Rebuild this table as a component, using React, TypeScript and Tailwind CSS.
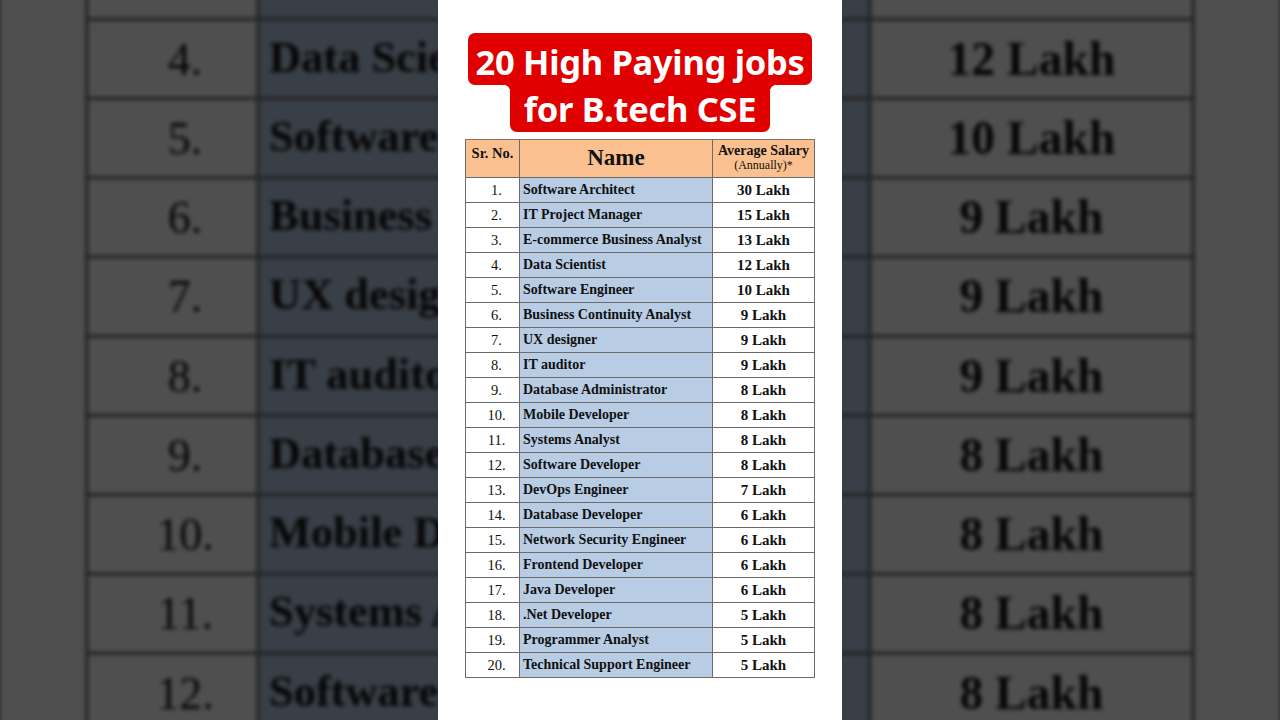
import React from 'react';

interface Job {
  name: string;
  salary: string;
}

const jobs: Job[] = [
  { name: 'Software Architect', salary: '30 Lakh' },
  { name: 'IT Project Manager', salary: '15 Lakh' },
  { name: 'E-commerce Business Analyst', salary: '13 Lakh' },
  { name: 'Data Scientist', salary: '12 Lakh' },
  { name: 'Software Engineer', salary: '10 Lakh' },
  { name: 'Business Continuity Analyst', salary: '9 Lakh' },
  { name: 'UX designer', salary: '9 Lakh' },
  { name: 'IT auditor', salary: '9 Lakh' },
  { name: 'Database Administrator', salary: '8 Lakh' },
  { name: 'Mobile Developer', salary: '8 Lakh' },
  { name: 'Systems Analyst', salary: '8 Lakh' },
  { name: 'Software Developer', salary: '8 Lakh' },
  { name: 'DevOps Engineer', salary: '7 Lakh' },
  { name: 'Database Developer', salary: '6 Lakh' },
  { name: 'Network Security Engineer', salary: '6 Lakh' },
  { name: 'Frontend Developer', salary: '6 Lakh' },
  { name: 'Java Developer', salary: '6 Lakh' },
  { name: '.Net Developer', salary: '5 Lakh' },
  { name: 'Programmer Analyst', salary: '5 Lakh' },
  { name: 'Technical Support Engineer', salary: '5 Lakh' },
];

function Sheet() {
  return (
    <div className="w-[404px] h-[720px] bg-white flex flex-col items-center pt-[33px]">
      <div className="flex flex-col items-center font-['Noto_Sans',sans-serif] font-bold text-white text-[34.5px]">
        <div className="h-[52px] w-[344px] leading-[58px] bg-[#e00000] rounded-[7px] text-center tracking-[-0.3px]">
          20 High Paying jobs
        </div>
        <div className="relative h-[47px] w-[260px] leading-[48px] bg-[#e00000] rounded-b-[7px] text-center tracking-[-0.3px] before:absolute before:left-[-7px] before:top-0 before:w-[7px] before:h-[7px] before:bg-[radial-gradient(circle_at_0_100%,transparent_7px,#e00000_7.5px)] after:absolute after:right-[-7px] after:top-0 after:w-[7px] after:h-[7px] after:bg-[radial-gradient(circle_at_100%_100%,transparent_7px,#e00000_7.5px)]">
          for B.tech CSE
        </div>
      </div>

      <table className="mt-[7px] border-collapse font-['Liberation_Serif',serif] text-[#111]">
        <thead>
          <tr className="bg-[#fac08f] h-[38px]">
            <th className="w-[54px] border border-[#6b6b6b] border-t-[#8a7560] text-[14.5px] font-bold align-top pt-[3px]">Sr. No.</th>
            <th className="w-[193px] border border-[#6b6b6b] border-t-[#8a7560] text-[23px] font-bold">Name</th>
            <th className="w-[102px] border border-[#6b6b6b] border-t-[#8a7560] font-bold leading-[15px] pb-[2px]">
              <div className="text-[14px]">Average Salary</div>
              <div className="text-[12px] font-normal">(Annually)*</div>
            </th>
          </tr>
        </thead>
        <tbody>
          {jobs.map((job, i) => (
            <tr key={job.name} className="h-[25px]">
              <td className="border border-[#6b6b6b] text-center text-[14.5px] p-0 pl-[8px] leading-[24px]">{i + 1}.</td>
              <td className="border border-[#6b6b6b] bg-[#b8cce4] text-[14px] font-bold pl-[3px] p-0 leading-[24px]">
                {job.name}
              </td>
              <td className="border border-[#6b6b6b] text-center text-[15px] font-bold p-0 leading-[24px]">{job.salary}</td>
            </tr>
          ))}
        </tbody>
      </table>
    </div>
  );
}

export default function App() {
  return (
    <div className="relative w-[1280px] h-[720px] overflow-hidden bg-[#4f4f4f]">
      {/* zoomed, dimmed copy of the sheet as backdrop */}
      <div aria-hidden="true" className="absolute inset-0 flex justify-center">
        <div className="scale-[3.17] origin-center blur-[0.7px]">
          <Sheet />
        </div>
      </div>
      <div className="absolute inset-0 bg-black/[0.69]" />
      <div className="relative flex justify-center">
        <Sheet />
      </div>
    </div>
  );
}
